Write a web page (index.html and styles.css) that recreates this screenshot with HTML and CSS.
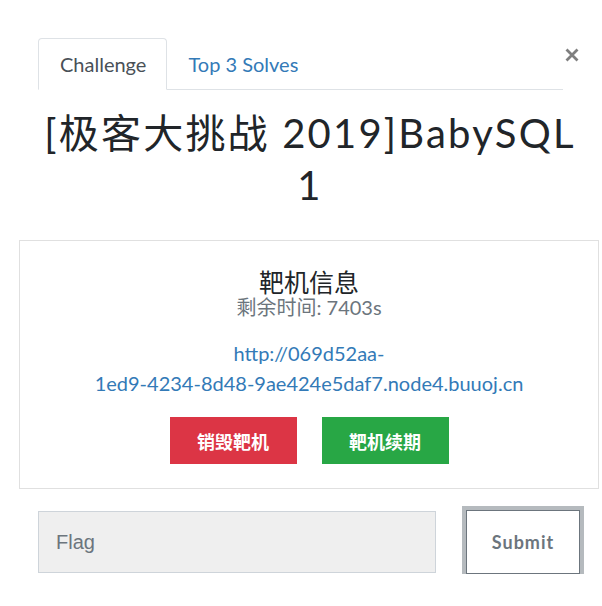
FILE: index.html
```html
<!DOCTYPE html>
<html lang="zh">
<head>
<meta charset="utf-8">
<title>[极客大挑战 2019]BabySQL 1</title>
<link rel="stylesheet" href="styles.css">
</head>
<body>
<div class="modal">
  <button class="close" aria-label="Close">
    <svg width="14" height="14" viewBox="0 0 14 14"><path d="M1.5 1.5 L12.5 12.5 M12.5 1.5 L1.5 12.5" stroke="#7f7f7f" stroke-width="2.8" stroke-linecap="butt"/></svg>
  </button>
  <ul class="nav">
    <li class="tab active">Challenge</li>
    <li class="tab link">Top 3 Solves</li>
  </ul>
  <h3 class="title">[极客大挑战 2019]BabySQL 1</h3>
  <div class="box">
    <h4 class="box-head">靶机信息</h4>
    <div class="remain">剩余时间: 7403s</div>
    <a class="url" href="#">http://069d52aa-<span class="nobr">1ed9-4234-8d48-9ae424e5daf7.node4.buuoj.cn</span></a>
    <div class="actions">
      <button class="btn btn-red">销毁靶机</button>
      <button class="btn btn-green">靶机续期</button>
    </div>
  </div>
  <form class="flag-row">
    <input class="flag-input" type="text" placeholder="Flag">
    <button class="submit" type="button">Submit</button>
  </form>
</div>
</body>
</html>
```
FILE: styles.css
```css
html, body {
  margin: 0;
  padding: 0;
  background: #fff;
}
body {
  font-family: "Lato", "Noto Sans CJK SC", sans-serif;
  color: #212529;
}
.modal {
  position: relative;
  width: 580px;
  margin-left: 19px;
  padding-top: 38px;
}
.close {
  position: absolute;
  top: 48px;
  left: 546px;
  width: 14px;
  height: 14px;
  padding: 0;
  border: 0;
  background: none;
  line-height: 0;
}
.nav {
  list-style: none;
  margin: 0 36px 0 19px;
  padding: 0;
  display: flex;
  border-bottom: 1px solid #dee2e6;
}
.tab {
  font-size: 20px;
  line-height: 24px;
  padding: 13px 20px 13px 21px;
  border: 1px solid transparent;
  margin-bottom: -1px;
  border-radius: 4px 4px 0 0;
}
.tab.active {
  color: #495057;
  border-color: #dee2e6 #dee2e6 #fff;
  background: #fff;
}
.tab.link {
  color: #337ab7;
  padding-left: 20px;
}
.title {
  width: 556px;
  margin: 17px 0 0 13px;
  font-size: 40px;
  font-weight: 400;
  line-height: 52px;
  letter-spacing: 2.2px;
  text-align: center;
  color: #212529;
}
.box {
  margin-top: 29px;
  border: 1px solid #e0e0e0;
  padding: 28px 20px 24px;
  text-align: center;
}
.box-head {
  margin: 0;
  font-size: 25px;
  font-weight: 400;
  line-height: 26px;
  color: #212529;
}
.remain {
  font-size: 20px;
  line-height: 24px;
  color: #6c757d;
}
.url {
  display: block;
  margin: 19px auto 0;
  font-size: 20px;
  line-height: 30px;
  color: #337ab7;
  text-decoration: none;
}
.nobr {
  white-space: nowrap;
}
.actions {
  display: flex;
  justify-content: center;
  gap: 25px;
  margin-top: 19px;
}
.btn {
  width: 127px;
  height: 47px;
  border: 0;
  border-radius: 0;
  color: #fff;
  font-family: "Noto Sans CJK SC", sans-serif;
  font-size: 18px;
  font-weight: 700;
  padding: 0;
}
.btn-red { background: #dc3545; }
.btn-green { background: #28a745; }
.flag-row {
  display: flex;
  align-items: center;
  gap: 30px;
  margin: 21px 0 0 19px;
}
.flag-input {
  box-sizing: border-box;
  width: 398px;
  height: 62px;
  border: 1px solid #ced4da;
  background: #efefef;
  padding: 0 17px;
  font-family: "Liberation Sans", sans-serif;
  font-size: 20px;
  color: #495057;
  border-radius: 0;
  outline: none;
}
.flag-input::placeholder {
  color: #6c757d;
}
.submit {
  box-sizing: border-box;
  width: 114px;
  height: 64px;
  border: 1px solid #6c757d;
  background: #fff;
  box-shadow: 0 0 0 4px #b5babe;
  color: #6c757d;
  font-family: "Lato", sans-serif;
  font-size: 18px;
  font-weight: 700;
  letter-spacing: 1px;
  border-radius: 0;
  padding: 0;
}
```
